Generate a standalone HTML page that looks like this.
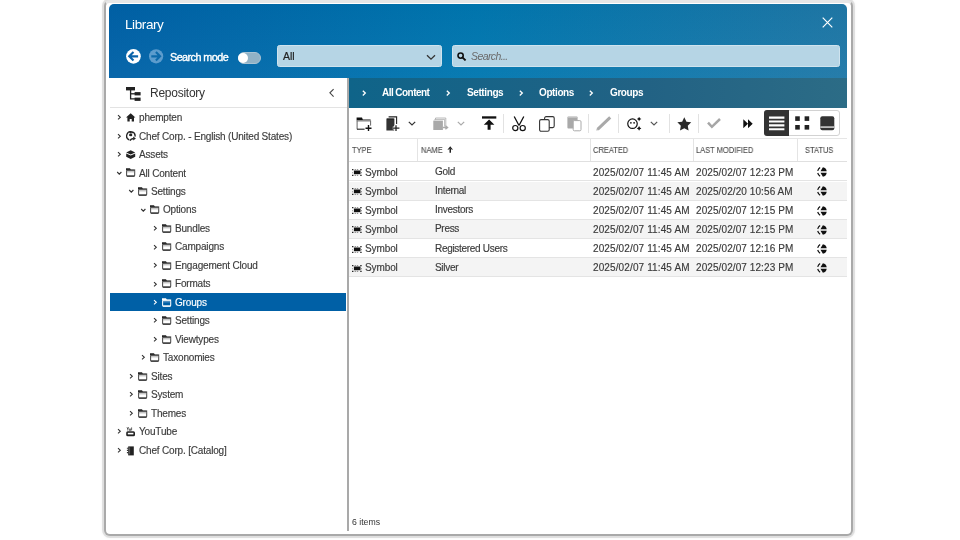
<!DOCTYPE html>
<html><head><meta charset="utf-8"><title>Library</title>
<style>
html,body{margin:0;padding:0;width:960px;height:540px;overflow:hidden;background:#fff;}
body{position:relative;font-family:"Liberation Sans", sans-serif;}
.t{position:absolute;white-space:nowrap;line-height:1;will-change:transform;}
.b{position:absolute;display:block;}
</style></head><body>
<div class="b" style="left:103.8px;top:-0.3px;width:749.4000000000001px;height:536.4px;border:2px solid #a9a9a9;border-top:3px solid #e6e6e6;border-radius:6px;box-sizing:border-box;box-shadow:0 0 0 2px rgba(0,0,0,0.09), 0 0 3px 2px rgba(0,0,0,0.05);background:#fff;"></div>
<div class="b" style="left:109px;top:4px;width:738px;height:74px;border-radius:5px 5px 0 0;background:linear-gradient(180deg,rgba(0,0,0,0.025),rgba(255,255,255,0.035)),linear-gradient(90deg,#0061a7 0%,#0077b0 50%,#1f78a7 100%);"></div>
<div class="t" style="left:124.50px;top:17.67px;font-size:13.5px;color:#fff;font-weight:normal;letter-spacing:-0.4px;font-style:normal;">Library</div>
<svg class="b" style="left:822px;top:16.6px" width="11" height="11" viewBox="0 0 11 11"><path d="M0.7 0.7L10.3 10.3M10.3 0.7L0.7 10.3" stroke="#fff" stroke-width="1.2"/></svg>
<svg class="b" style="left:125.8px;top:49px" width="15" height="15" viewBox="0 0 15 15"><circle cx="7.45" cy="7.35" r="7.35" fill="#fff"/><path d="M3 7.35H12.1M7.5 3.1L3.2 7.35L7.5 11.6" stroke="#0a64aa" stroke-width="2.1" fill="none"/></svg>
<svg class="b" style="left:148.6px;top:49px" width="15" height="15" viewBox="0 0 15 15"><circle cx="7.1" cy="7.35" r="7.1" fill="#5c9ccd"/><path d="M2.3 7.35H11.1M6.9 3.1L11.1 7.35L6.9 11.6" stroke="#0d6aab" stroke-width="2.1" fill="none"/></svg>
<div class="t" style="left:169.60px;top:52.06px;font-size:10.8px;color:#fff;font-weight:normal;letter-spacing:-0.55px;font-style:normal;-webkit-text-stroke:0.35px #fff;">Search mode</div>
<div class="b" style="left:237.5px;top:51.9px;width:23.5px;height:11.800000000000004px;background:#91b2c6;border:1px solid #a9c3d3;box-sizing:border-box;border-radius:6px;"></div>
<div class="b" style="left:237.6px;top:52.6px;width:10.400000000000006px;height:10.399999999999999px;background:#fff;border-radius:50%;"></div>
<div class="b" style="left:277px;top:45.3px;width:165px;height:22.0px;background:#b6d5e5;border:1px solid #cfe3ee;box-sizing:border-box;border-radius:2.5px;"></div>
<div class="t" style="left:282.70px;top:51.11px;font-size:10.5px;color:#222;font-weight:normal;letter-spacing:0px;font-style:normal;-webkit-text-stroke:0.2px #222;">All</div>
<svg class="b" style="left:426.1px;top:53.7px" width="10" height="7" viewBox="0 0 10 7"><path d="M1 1.2L5 5.2L9 1.2" stroke="#333" stroke-width="1.3" fill="none"/></svg>
<div class="b" style="left:452px;top:45.3px;width:388px;height:22.0px;background:#b6d5e5;border:1px solid #cfe3ee;box-sizing:border-box;border-radius:2.5px;"></div>
<svg class="b" style="left:457px;top:52px" width="10" height="9" viewBox="0 0 10 9"><circle cx="3.6" cy="3.6" r="2.6" stroke="#111" stroke-width="1.6" fill="none"/><path d="M5.4 5.4L8.6 8.4" stroke="#111" stroke-width="1.9"/></svg>
<div class="t" style="left:471.40px;top:51.01px;font-size:10.5px;color:#6a6a6a;font-weight:normal;letter-spacing:-0.6px;font-style:italic;">Search...</div>
<div class="b" style="left:109.5px;top:78px;width:237.5px;height:30.200000000000003px;background:#fff;border-bottom:1.2px solid #e3e3e3;box-sizing:border-box;"></div>
<svg class="b" style="left:126px;top:87px" width="15" height="15" viewBox="0 0 15 15"><rect x="0" y="0" width="9" height="3.4" fill="#222"/><path d="M4.6 3V11.8H9" stroke="#222" stroke-width="1.3" fill="none"/><path d="M4.6 6.8H9" stroke="#222" stroke-width="1.3"/><rect x="8.6" y="5.1" width="6" height="3.3" fill="#222"/><rect x="8.6" y="10.6" width="6" height="3.3" fill="#222"/></svg>
<div class="t" style="left:149.60px;top:86.54px;font-size:12px;color:#333;font-weight:normal;letter-spacing:-0.25px;font-style:normal;">Repository</div>
<svg class="b" style="left:328px;top:87px" width="7" height="11" viewBox="0 0 7 11"><path d="M5.6 2.1L1.9 5.8L5.6 9.6" stroke="#444" stroke-width="1.1" fill="none"/></svg>
<div class="b" style="left:347px;top:78px;width:1.6000000000000227px;height:453px;background:#a9a9a9;"></div>
<svg class="b" style="left:117.4px;top:114.1px" width="5" height="7" viewBox="0 0 5 7"><path d="M1 1.2L3.3 3.3L1 5.4" stroke="#333" stroke-width="1.1" fill="none"/></svg>
<svg class="b" style="left:126px;top:112.8px" width="10" height="10" viewBox="0 0 10 10"><path d="M4.7 0.3L9.4 4.6H8V8.6H5.7V6H3.7V8.6H1.4V4.6H0Z" fill="#222"/></svg>
<div class="t" style="left:138.80px;top:113.03px;font-size:10px;color:#3c3c3c;font-weight:normal;letter-spacing:-0.18px;font-style:normal;-webkit-text-stroke:0.15px #3c3c3c;">phempten</div>
<svg class="b" style="left:117.4px;top:132.59px" width="5" height="7" viewBox="0 0 5 7"><path d="M1 1.2L3.3 3.3L1 5.4" stroke="#333" stroke-width="1.1" fill="none"/></svg>
<svg class="b" style="left:126px;top:131.29000000000002px" width="10" height="10" viewBox="0 0 10 10"><path d="M3.2 8.8A4.2 4.2 0 1 1 9 5.6" stroke="#222" stroke-width="1.35" fill="none"/><path d="M3 3.6Q4.2 2.4 5.9 3Q6.8 4 5.9 5.1Q4.4 5.8 3 4.6Z" fill="#222"/><path d="M3.5 1.4Q5 2.4 7 1.5" stroke="#222" stroke-width="1.3" fill="none"/><path d="M3.9 9.6Q5 7.6 7.6 7.5" stroke="#222" stroke-width="1.4" fill="none"/><path d="M7.2 5.6L9.9 7.5L7.2 9.4Z" fill="#222"/></svg>
<div class="t" style="left:138.80px;top:131.53px;font-size:10px;color:#3c3c3c;font-weight:normal;letter-spacing:-0.18px;font-style:normal;-webkit-text-stroke:0.15px #3c3c3c;">Chef Corp. - English (United States)</div>
<svg class="b" style="left:117.4px;top:151.07999999999998px" width="5" height="7" viewBox="0 0 5 7"><path d="M1 1.2L3.3 3.3L1 5.4" stroke="#333" stroke-width="1.1" fill="none"/></svg>
<svg class="b" style="left:126px;top:149.78px" width="10" height="10" viewBox="0 0 10 10"><path d="M4.7 0.2L9.2 2.4L4.7 4.6L0.2 2.4Z" fill="#222"/><path d="M0.2 3.4L4.7 5.6L9.2 3.4V6.8L4.7 9L0.2 6.8Z" fill="#222"/></svg>
<div class="t" style="left:138.80px;top:150.01px;font-size:10px;color:#3c3c3c;font-weight:normal;letter-spacing:-0.18px;font-style:normal;-webkit-text-stroke:0.15px #3c3c3c;">Assets</div>
<svg class="b" style="left:116.4px;top:170.97px" width="7" height="5" viewBox="0 0 7 5"><path d="M1.2 1L3.3 3.2L5.4 1" stroke="#333" stroke-width="1.1" fill="none"/></svg>
<svg class="b" style="left:126px;top:168.27px" width="10" height="10" viewBox="0 0 10 10"><path d="M0 0.3H3.9L4.9 1.6H9.2V2.6H0Z" fill="#222"/><rect x="0.6" y="2.3" width="8.1" height="5.8" rx="0.8" stroke="#4a4a4a" stroke-width="1.05" fill="none"/><path d="M0.8 8.1H8.5" stroke="#2a2a2a" stroke-width="1"/><path d="M1 3.8H8.4" stroke="#999" stroke-width="0.8"/></svg>
<div class="t" style="left:138.80px;top:168.50px;font-size:10px;color:#3c3c3c;font-weight:normal;letter-spacing:-0.18px;font-style:normal;-webkit-text-stroke:0.15px #3c3c3c;">All Content</div>
<svg class="b" style="left:128.4px;top:189.46px" width="7" height="5" viewBox="0 0 7 5"><path d="M1.2 1L3.3 3.2L5.4 1" stroke="#333" stroke-width="1.1" fill="none"/></svg>
<svg class="b" style="left:138px;top:186.76000000000002px" width="10" height="10" viewBox="0 0 10 10"><path d="M0 0.3H3.9L4.9 1.6H9.2V2.6H0Z" fill="#222"/><rect x="0.6" y="2.3" width="8.1" height="5.8" rx="0.8" stroke="#4a4a4a" stroke-width="1.05" fill="none"/><path d="M0.8 8.1H8.5" stroke="#2a2a2a" stroke-width="1"/><path d="M1 3.8H8.4" stroke="#999" stroke-width="0.8"/></svg>
<div class="t" style="left:150.80px;top:187.00px;font-size:10px;color:#3c3c3c;font-weight:normal;letter-spacing:-0.18px;font-style:normal;-webkit-text-stroke:0.15px #3c3c3c;">Settings</div>
<svg class="b" style="left:140.4px;top:207.95px" width="7" height="5" viewBox="0 0 7 5"><path d="M1.2 1L3.3 3.2L5.4 1" stroke="#333" stroke-width="1.1" fill="none"/></svg>
<svg class="b" style="left:150px;top:205.25px" width="10" height="10" viewBox="0 0 10 10"><path d="M0 0.3H3.9L4.9 1.6H9.2V2.6H0Z" fill="#222"/><rect x="0.6" y="2.3" width="8.1" height="5.8" rx="0.8" stroke="#4a4a4a" stroke-width="1.05" fill="none"/><path d="M0.8 8.1H8.5" stroke="#2a2a2a" stroke-width="1"/><path d="M1 3.8H8.4" stroke="#999" stroke-width="0.8"/></svg>
<div class="t" style="left:162.80px;top:205.48px;font-size:10px;color:#3c3c3c;font-weight:normal;letter-spacing:-0.18px;font-style:normal;-webkit-text-stroke:0.15px #3c3c3c;">Options</div>
<svg class="b" style="left:153.4px;top:225.04px" width="5" height="7" viewBox="0 0 5 7"><path d="M1 1.2L3.3 3.3L1 5.4" stroke="#333" stroke-width="1.1" fill="none"/></svg>
<svg class="b" style="left:162px;top:223.74px" width="10" height="10" viewBox="0 0 10 10"><path d="M0 0.3H3.9L4.9 1.6H9.2V2.6H0Z" fill="#222"/><rect x="0.6" y="2.3" width="8.1" height="5.8" rx="0.8" stroke="#4a4a4a" stroke-width="1.05" fill="none"/><path d="M0.8 8.1H8.5" stroke="#2a2a2a" stroke-width="1"/><path d="M1 3.8H8.4" stroke="#999" stroke-width="0.8"/></svg>
<div class="t" style="left:174.80px;top:223.97px;font-size:10px;color:#3c3c3c;font-weight:normal;letter-spacing:-0.18px;font-style:normal;-webkit-text-stroke:0.15px #3c3c3c;">Bundles</div>
<svg class="b" style="left:153.4px;top:243.52999999999997px" width="5" height="7" viewBox="0 0 5 7"><path d="M1 1.2L3.3 3.3L1 5.4" stroke="#333" stroke-width="1.1" fill="none"/></svg>
<svg class="b" style="left:162px;top:242.23px" width="10" height="10" viewBox="0 0 10 10"><path d="M0 0.3H3.9L4.9 1.6H9.2V2.6H0Z" fill="#222"/><rect x="0.6" y="2.3" width="8.1" height="5.8" rx="0.8" stroke="#4a4a4a" stroke-width="1.05" fill="none"/><path d="M0.8 8.1H8.5" stroke="#2a2a2a" stroke-width="1"/><path d="M1 3.8H8.4" stroke="#999" stroke-width="0.8"/></svg>
<div class="t" style="left:174.80px;top:242.46px;font-size:10px;color:#3c3c3c;font-weight:normal;letter-spacing:-0.18px;font-style:normal;-webkit-text-stroke:0.15px #3c3c3c;">Campaigns</div>
<svg class="b" style="left:153.4px;top:262.02px" width="5" height="7" viewBox="0 0 5 7"><path d="M1 1.2L3.3 3.3L1 5.4" stroke="#333" stroke-width="1.1" fill="none"/></svg>
<svg class="b" style="left:162px;top:260.71999999999997px" width="10" height="10" viewBox="0 0 10 10"><path d="M0 0.3H3.9L4.9 1.6H9.2V2.6H0Z" fill="#222"/><rect x="0.6" y="2.3" width="8.1" height="5.8" rx="0.8" stroke="#4a4a4a" stroke-width="1.05" fill="none"/><path d="M0.8 8.1H8.5" stroke="#2a2a2a" stroke-width="1"/><path d="M1 3.8H8.4" stroke="#999" stroke-width="0.8"/></svg>
<div class="t" style="left:174.80px;top:260.95px;font-size:10px;color:#3c3c3c;font-weight:normal;letter-spacing:-0.18px;font-style:normal;-webkit-text-stroke:0.15px #3c3c3c;">Engagement Cloud</div>
<svg class="b" style="left:153.4px;top:280.51px" width="5" height="7" viewBox="0 0 5 7"><path d="M1 1.2L3.3 3.3L1 5.4" stroke="#333" stroke-width="1.1" fill="none"/></svg>
<svg class="b" style="left:162px;top:279.21px" width="10" height="10" viewBox="0 0 10 10"><path d="M0 0.3H3.9L4.9 1.6H9.2V2.6H0Z" fill="#222"/><rect x="0.6" y="2.3" width="8.1" height="5.8" rx="0.8" stroke="#4a4a4a" stroke-width="1.05" fill="none"/><path d="M0.8 8.1H8.5" stroke="#2a2a2a" stroke-width="1"/><path d="M1 3.8H8.4" stroke="#999" stroke-width="0.8"/></svg>
<div class="t" style="left:174.80px;top:279.44px;font-size:10px;color:#3c3c3c;font-weight:normal;letter-spacing:-0.18px;font-style:normal;-webkit-text-stroke:0.15px #3c3c3c;">Formats</div>
<div class="b" style="left:109.5px;top:293px;width:236.0px;height:18.19999999999999px;background:#0060a6;"></div>
<svg class="b" style="left:153.4px;top:299.0px" width="5" height="7" viewBox="0 0 5 7"><path d="M1 1.2L3.3 3.3L1 5.4" stroke="#fff" stroke-width="1.1" fill="none"/></svg>
<svg class="b" style="left:162px;top:297.7px" width="10" height="10" viewBox="0 0 10 10"><path d="M0 0.3H3.9L4.9 1.6H9.2V2.6H0Z" fill="#fff"/><rect x="0.6" y="2.3" width="8.1" height="5.8" rx="0.8" stroke="#fff" stroke-width="1.05" fill="none"/><path d="M0.8 8.1H8.5" stroke="#fff" stroke-width="1"/><path d="M1 3.8H8.4" stroke="#8fb8da" stroke-width="0.8"/></svg>
<div class="t" style="left:174.80px;top:297.94px;font-size:10px;color:#fff;font-weight:normal;letter-spacing:-0.18px;font-style:normal;-webkit-text-stroke:0.15px #fff;">Groups</div>
<svg class="b" style="left:153.4px;top:317.49px" width="5" height="7" viewBox="0 0 5 7"><path d="M1 1.2L3.3 3.3L1 5.4" stroke="#333" stroke-width="1.1" fill="none"/></svg>
<svg class="b" style="left:162px;top:316.19px" width="10" height="10" viewBox="0 0 10 10"><path d="M0 0.3H3.9L4.9 1.6H9.2V2.6H0Z" fill="#222"/><rect x="0.6" y="2.3" width="8.1" height="5.8" rx="0.8" stroke="#4a4a4a" stroke-width="1.05" fill="none"/><path d="M0.8 8.1H8.5" stroke="#2a2a2a" stroke-width="1"/><path d="M1 3.8H8.4" stroke="#999" stroke-width="0.8"/></svg>
<div class="t" style="left:174.80px;top:316.43px;font-size:10px;color:#3c3c3c;font-weight:normal;letter-spacing:-0.18px;font-style:normal;-webkit-text-stroke:0.15px #3c3c3c;">Settings</div>
<svg class="b" style="left:153.4px;top:335.98px" width="5" height="7" viewBox="0 0 5 7"><path d="M1 1.2L3.3 3.3L1 5.4" stroke="#333" stroke-width="1.1" fill="none"/></svg>
<svg class="b" style="left:162px;top:334.68px" width="10" height="10" viewBox="0 0 10 10"><path d="M0 0.3H3.9L4.9 1.6H9.2V2.6H0Z" fill="#222"/><rect x="0.6" y="2.3" width="8.1" height="5.8" rx="0.8" stroke="#4a4a4a" stroke-width="1.05" fill="none"/><path d="M0.8 8.1H8.5" stroke="#2a2a2a" stroke-width="1"/><path d="M1 3.8H8.4" stroke="#999" stroke-width="0.8"/></svg>
<div class="t" style="left:174.80px;top:334.92px;font-size:10px;color:#3c3c3c;font-weight:normal;letter-spacing:-0.18px;font-style:normal;-webkit-text-stroke:0.15px #3c3c3c;">Viewtypes</div>
<svg class="b" style="left:141.4px;top:354.46999999999997px" width="5" height="7" viewBox="0 0 5 7"><path d="M1 1.2L3.3 3.3L1 5.4" stroke="#333" stroke-width="1.1" fill="none"/></svg>
<svg class="b" style="left:150px;top:353.16999999999996px" width="10" height="10" viewBox="0 0 10 10"><path d="M0 0.3H3.9L4.9 1.6H9.2V2.6H0Z" fill="#222"/><rect x="0.6" y="2.3" width="8.1" height="5.8" rx="0.8" stroke="#4a4a4a" stroke-width="1.05" fill="none"/><path d="M0.8 8.1H8.5" stroke="#2a2a2a" stroke-width="1"/><path d="M1 3.8H8.4" stroke="#999" stroke-width="0.8"/></svg>
<div class="t" style="left:162.80px;top:353.40px;font-size:10px;color:#3c3c3c;font-weight:normal;letter-spacing:-0.18px;font-style:normal;-webkit-text-stroke:0.15px #3c3c3c;">Taxonomies</div>
<svg class="b" style="left:129.4px;top:372.9599999999999px" width="5" height="7" viewBox="0 0 5 7"><path d="M1 1.2L3.3 3.3L1 5.4" stroke="#333" stroke-width="1.1" fill="none"/></svg>
<svg class="b" style="left:138px;top:371.6599999999999px" width="10" height="10" viewBox="0 0 10 10"><path d="M0 0.3H3.9L4.9 1.6H9.2V2.6H0Z" fill="#222"/><rect x="0.6" y="2.3" width="8.1" height="5.8" rx="0.8" stroke="#4a4a4a" stroke-width="1.05" fill="none"/><path d="M0.8 8.1H8.5" stroke="#2a2a2a" stroke-width="1"/><path d="M1 3.8H8.4" stroke="#999" stroke-width="0.8"/></svg>
<div class="t" style="left:150.80px;top:371.89px;font-size:10px;color:#3c3c3c;font-weight:normal;letter-spacing:-0.18px;font-style:normal;-webkit-text-stroke:0.15px #3c3c3c;">Sites</div>
<svg class="b" style="left:129.4px;top:391.44999999999993px" width="5" height="7" viewBox="0 0 5 7"><path d="M1 1.2L3.3 3.3L1 5.4" stroke="#333" stroke-width="1.1" fill="none"/></svg>
<svg class="b" style="left:138px;top:390.1499999999999px" width="10" height="10" viewBox="0 0 10 10"><path d="M0 0.3H3.9L4.9 1.6H9.2V2.6H0Z" fill="#222"/><rect x="0.6" y="2.3" width="8.1" height="5.8" rx="0.8" stroke="#4a4a4a" stroke-width="1.05" fill="none"/><path d="M0.8 8.1H8.5" stroke="#2a2a2a" stroke-width="1"/><path d="M1 3.8H8.4" stroke="#999" stroke-width="0.8"/></svg>
<div class="t" style="left:150.80px;top:390.38px;font-size:10px;color:#3c3c3c;font-weight:normal;letter-spacing:-0.18px;font-style:normal;-webkit-text-stroke:0.15px #3c3c3c;">System</div>
<svg class="b" style="left:129.4px;top:409.93999999999994px" width="5" height="7" viewBox="0 0 5 7"><path d="M1 1.2L3.3 3.3L1 5.4" stroke="#333" stroke-width="1.1" fill="none"/></svg>
<svg class="b" style="left:138px;top:408.63999999999993px" width="10" height="10" viewBox="0 0 10 10"><path d="M0 0.3H3.9L4.9 1.6H9.2V2.6H0Z" fill="#222"/><rect x="0.6" y="2.3" width="8.1" height="5.8" rx="0.8" stroke="#4a4a4a" stroke-width="1.05" fill="none"/><path d="M0.8 8.1H8.5" stroke="#2a2a2a" stroke-width="1"/><path d="M1 3.8H8.4" stroke="#999" stroke-width="0.8"/></svg>
<div class="t" style="left:150.80px;top:408.87px;font-size:10px;color:#3c3c3c;font-weight:normal;letter-spacing:-0.18px;font-style:normal;-webkit-text-stroke:0.15px #3c3c3c;">Themes</div>
<svg class="b" style="left:117.4px;top:428.42999999999995px" width="5" height="7" viewBox="0 0 5 7"><path d="M1 1.2L3.3 3.3L1 5.4" stroke="#333" stroke-width="1.1" fill="none"/></svg>
<svg class="b" style="left:126px;top:427.12999999999994px" width="10" height="10" viewBox="0 0 10 10"><path d="M1 0.2L1.8 2.2L2.6 0.2M1.8 2.2V3.6M3.4 1.6V3.4H4.6V1.6M5.6 0.4V3.4" stroke="#222" stroke-width="0.7" fill="none"/><rect x="0.2" y="4.2" width="8.8" height="5" rx="1.5" fill="#222"/><rect x="1.8" y="5.8" width="5.6" height="1.6" fill="#fff"/></svg>
<div class="t" style="left:138.80px;top:427.36px;font-size:10px;color:#3c3c3c;font-weight:normal;letter-spacing:-0.18px;font-style:normal;-webkit-text-stroke:0.15px #3c3c3c;">YouTube</div>
<svg class="b" style="left:117.4px;top:446.91999999999996px" width="5" height="7" viewBox="0 0 5 7"><path d="M1 1.2L3.3 3.3L1 5.4" stroke="#333" stroke-width="1.1" fill="none"/></svg>
<svg class="b" style="left:126px;top:445.61999999999995px" width="10" height="10" viewBox="0 0 10 10"><rect x="2.2" y="0.4" width="5.6" height="9" fill="#222"/><path d="M0.9 2.2H2.4M0.9 4.4H2.4M0.9 6.6H2.4" stroke="#333" stroke-width="1.1"/><path d="M3.6 1.4V8.4" stroke="#777" stroke-width="0.7"/></svg>
<div class="t" style="left:138.80px;top:445.85px;font-size:10px;color:#3c3c3c;font-weight:normal;letter-spacing:-0.18px;font-style:normal;-webkit-text-stroke:0.15px #3c3c3c;">Chef Corp. [Catalog]</div>
<div class="b" style="left:348.6px;top:77.5px;width:498.4px;height:30.0px;background:linear-gradient(90deg,#0f6489 0%,#226284 60%,#2c6c86 100%);"></div>
<svg class="b" style="left:361.9px;top:89.6px" width="5" height="6.5" viewBox="0 0 5 6.5"><path d="M0.8 0.8L3.3 3.1L0.8 5.4" stroke="#fff" stroke-width="1.3" fill="none"/></svg>
<svg class="b" style="left:445.6px;top:89.6px" width="5" height="6.5" viewBox="0 0 5 6.5"><path d="M0.8 0.8L3.3 3.1L0.8 5.4" stroke="#fff" stroke-width="1.3" fill="none"/></svg>
<svg class="b" style="left:518.5px;top:89.6px" width="5" height="6.5" viewBox="0 0 5 6.5"><path d="M0.8 0.8L3.3 3.1L0.8 5.4" stroke="#fff" stroke-width="1.3" fill="none"/></svg>
<svg class="b" style="left:589.2px;top:89.6px" width="5" height="6.5" viewBox="0 0 5 6.5"><path d="M0.8 0.8L3.3 3.1L0.8 5.4" stroke="#fff" stroke-width="1.3" fill="none"/></svg>
<div class="t" style="left:381.70px;top:87.53px;font-size:10px;color:#fff;font-weight:bold;letter-spacing:-0.55px;font-style:normal;">All Content</div>
<div class="t" style="left:466.90px;top:87.53px;font-size:10px;color:#fff;font-weight:bold;letter-spacing:-0.4px;font-style:normal;">Settings</div>
<div class="t" style="left:539.20px;top:87.53px;font-size:10px;color:#fff;font-weight:bold;letter-spacing:-0.4px;font-style:normal;">Options</div>
<div class="t" style="left:609.90px;top:87.53px;font-size:10px;color:#fff;font-weight:bold;letter-spacing:-0.4px;font-style:normal;">Groups</div>
<div class="b" style="left:348.6px;top:107.5px;width:498.4px;height:31.0px;background:#fff;border-bottom:1px solid #e6e6e6;box-sizing:border-box;"></div>
<div class="b" style="left:502.9px;top:113.5px;width:1.0px;height:19.30000000000001px;background:#e2e2e2;"></div>
<div class="b" style="left:588.2px;top:113.5px;width:1.0px;height:19.30000000000001px;background:#e2e2e2;"></div>
<div class="b" style="left:617.8px;top:113.5px;width:1.0px;height:19.30000000000001px;background:#e2e2e2;"></div>
<div class="b" style="left:669.1px;top:113.5px;width:1.0px;height:19.30000000000001px;background:#e2e2e2;"></div>
<div class="b" style="left:698.4px;top:113.5px;width:1.0px;height:19.30000000000001px;background:#e2e2e2;"></div>
<svg class="b" style="left:355.5px;top:116.5px" width="17" height="15" viewBox="0 0 17 15"><path d="M0.6 0.6H6L6.8 2.6H14.6V3.6H0.6Z" fill="#111"/><path d="M0.8 4.1H14.3" stroke="#999" stroke-width="1"/><path d="M1.1 3.5V12.3M14.6 3.5V8.6" stroke="#666" stroke-width="1" fill="none"/><path d="M1 12.2H8.6" stroke="#222" stroke-width="1.1"/><path d="M12.5 8.1V14M9.5 11.2H15.5" stroke="#111" stroke-width="1.4"/></svg>
<svg class="b" style="left:385.5px;top:115.5px" width="14" height="16" viewBox="0 0 14 16"><path d="M2.6 0.9H10.6V8" stroke="#222" stroke-width="1.1" fill="none"/><rect x="0.4" y="2.5" width="8" height="12" fill="#333"/><path d="M1 3H7.8" stroke="#111" stroke-width="0.8"/><path d="M10 9V15.2M6.8 12.1H13.6" stroke="#fff" stroke-width="3"/><path d="M10 9.2V15M7 12.1H13.4" stroke="#222" stroke-width="1.3"/></svg>
<svg class="b" style="left:408.2px;top:121.2px" width="8" height="5" viewBox="0 0 8 5"><path d="M0.8 0.8L4 4L7.2 0.8" stroke="#333" stroke-width="1.2" fill="none"/></svg>
<svg class="b" style="left:432.5px;top:116.5px" width="16" height="14" viewBox="0 0 16 14"><path d="M2.5 2.3V1H12.8V9.2M1.8 3.2V2.4H11.6V9.6" stroke="#aaa" stroke-width="0.8" fill="none"/><rect x="0.3" y="3.6" width="9.6" height="9.4" fill="#a9a9a9"/><path d="M10 10.5H14M12.4 8.8L14.6 10.5L12.4 12.2" stroke="#aaa" stroke-width="1.3" fill="none"/></svg>
<svg class="b" style="left:456.7px;top:121.2px" width="8" height="5" viewBox="0 0 8 5"><path d="M0.8 0.8L4 4L7.2 0.8" stroke="#aaa" stroke-width="1.2" fill="none"/></svg>
<svg class="b" style="left:481.5px;top:116px" width="15" height="14" viewBox="0 0 15 14"><rect x="0" y="0.3" width="14.3" height="2.3" fill="#111"/><path d="M5.6 13.8V8.8H1.8L7.1 3.6L12.4 8.8H8.6V13.8Z" fill="#111"/></svg>
<svg class="b" style="left:511.5px;top:115.5px" width="14" height="16" viewBox="0 0 14 16"><path d="M2.2 0.5L7 9.5M11.8 0.5L7 9.5" stroke="#111" stroke-width="1.3"/><circle cx="3.3" cy="12.1" r="2.6" stroke="#111" stroke-width="1.2" fill="none"/><circle cx="10.7" cy="12.1" r="2.6" stroke="#111" stroke-width="1.2" fill="none"/></svg>
<svg class="b" style="left:538.5px;top:115.5px" width="16" height="16" viewBox="0 0 16 16"><rect x="5.6" y="0.6" width="9.6" height="11" rx="1.5" stroke="#333" stroke-width="1.1" fill="#fff"/><rect x="0.6" y="3.6" width="9.6" height="11.6" rx="1.5" stroke="#333" stroke-width="1.1" fill="#fff"/></svg>
<svg class="b" style="left:566.5px;top:115.5px" width="15" height="16" viewBox="0 0 15 16"><rect x="0.4" y="0.4" width="10.2" height="12" rx="1" fill="#a9a9a9"/><path d="M1 1.5H10" stroke="#ccc" stroke-width="0.7"/><rect x="6.2" y="4.6" width="7.8" height="10.2" rx="1.2" stroke="#aaa" stroke-width="1" fill="#fff"/></svg>
<svg class="b" style="left:595.5px;top:116px" width="16" height="15" viewBox="0 0 16 15"><path d="M1.6 13.3L14.2 1.3" stroke="#a9a9a9" stroke-width="3"/><path d="M0.6 14.4L1.6 13.2" stroke="#aaa" stroke-width="1.2"/></svg>
<svg class="b" style="left:626.5px;top:116.5px" width="15" height="14" viewBox="0 0 15 14"><circle cx="5.5" cy="6.7" r="4.75" stroke="#111" stroke-width="1.2" fill="none"/><circle cx="3.9" cy="5.8" r="0.85" fill="#111"/><circle cx="7.1" cy="5.8" r="0.85" fill="#111"/><path d="M12.1 -0.2999999999999998Q12.549999999999999 1.55 14.399999999999999 2.0Q12.549999999999999 2.45 12.1 4.3Q11.65 2.45 9.8 2.0Q11.65 1.55 12.1 -0.2999999999999998Z M12.1 9.100000000000001Q12.549999999999999 10.950000000000001 14.399999999999999 11.4Q12.549999999999999 11.85 12.1 13.7Q11.65 11.85 9.8 11.4Q11.65 10.950000000000001 12.1 9.100000000000001Z" fill="#111"/></svg>
<svg class="b" style="left:650px;top:121.2px" width="8" height="5" viewBox="0 0 8 5"><path d="M0.8 0.8L4 4L7.2 0.8" stroke="#555" stroke-width="1.2" fill="none"/></svg>
<svg class="b" style="left:676.5px;top:116.5px" width="15" height="14" viewBox="0 0 15 14"><path d="M7.3 0.3L9.45 4.65L14.24 5.34L10.77 8.73L11.59 13.51L7.3 11.25L3.01 13.51L3.83 8.73L0.36 5.34L5.15 4.65Z" fill="#2a2a2a"/></svg>
<svg class="b" style="left:707px;top:118px" width="14" height="11" viewBox="0 0 14 11"><path d="M1 4.6L4.9 8.8L13 1" stroke="#a6a6a6" stroke-width="2.5" fill="none"/></svg>
<svg class="b" style="left:743px;top:118.5px" width="10" height="9.5" viewBox="0 0 10 9.5"><path d="M0.3 0.3L5 4.7L0.3 9.2Z M5 0.3L9.7 4.7L5 9.2Z" fill="#111"/></svg>
<div class="b" style="left:764px;top:110px;width:75.79999999999995px;height:26.30000000000001px;border:1px solid #d2d2d2;border-radius:3px;box-sizing:border-box;background:#fff;"></div>
<div class="b" style="left:764px;top:110px;width:25px;height:26.30000000000001px;background:#333;border-radius:3px 0 0 3px;"></div>
<svg class="b" style="left:768.8px;top:115.8px" width="16" height="15" viewBox="0 0 16 15"><path d="M0 1.6H15.4M0 5.5H15.4M0 9.4H15.4M0 13.3H15.4" stroke="#fff" stroke-width="2.1"/></svg>
<svg class="b" style="left:794.5px;top:116px" width="15" height="14" viewBox="0 0 15 14"><rect x="0.2" y="0.3" width="4.6" height="4.6" fill="#222"/><rect x="9.6" y="0.3" width="4.6" height="4.6" fill="#222"/><rect x="0.2" y="9" width="4.6" height="4.6" fill="#222"/><rect x="9.6" y="9" width="4.6" height="4.6" fill="#222"/></svg>
<svg class="b" style="left:819.8px;top:115.6px" width="15" height="15" viewBox="0 0 15 15"><rect x="0.3" y="0.2" width="14" height="14" rx="2" fill="#333"/><rect x="0.3" y="10.2" width="14" height="1.8" fill="#bbb"/></svg>
<div class="b" style="left:348.6px;top:138.5px;width:498.4px;height:23.900000000000006px;background:#fff;border-bottom:1.5px solid #e0e0e0;box-sizing:border-box;"></div>
<div class="b" style="left:417.3px;top:139px;width:1.0px;height:22px;background:#e4e4e4;"></div>
<div class="b" style="left:590.3px;top:139px;width:1.0px;height:22px;background:#e4e4e4;"></div>
<div class="b" style="left:693.3px;top:139px;width:1.0px;height:22px;background:#e4e4e4;"></div>
<div class="b" style="left:796.5px;top:139px;width:1.0px;height:22px;background:#e4e4e4;"></div>
<div class="t" style="left:351.60px;top:146.00px;font-size:8.5px;color:#4a4a4a;font-weight:normal;letter-spacing:0px;font-style:normal;transform:scaleX(0.88);transform-origin:0 0;-webkit-text-stroke:0.1px #4a4a4a;">TYPE</div>
<div class="t" style="left:420.60px;top:146.00px;font-size:8.5px;color:#4a4a4a;font-weight:normal;letter-spacing:0px;font-style:normal;transform:scaleX(0.88);transform-origin:0 0;-webkit-text-stroke:0.1px #4a4a4a;">NAME</div>
<div class="t" style="left:593.40px;top:146.00px;font-size:8.5px;color:#4a4a4a;font-weight:normal;letter-spacing:0px;font-style:normal;transform:scaleX(0.88);transform-origin:0 0;-webkit-text-stroke:0.1px #4a4a4a;">CREATED</div>
<div class="t" style="left:696.10px;top:146.00px;font-size:8.5px;color:#4a4a4a;font-weight:normal;letter-spacing:0px;font-style:normal;transform:scaleX(0.88);transform-origin:0 0;-webkit-text-stroke:0.1px #4a4a4a;">LAST MODIFIED</div>
<div class="t" style="left:805.40px;top:146.00px;font-size:8.5px;color:#4a4a4a;font-weight:normal;letter-spacing:0px;font-style:normal;transform:scaleX(0.88);transform-origin:0 0;-webkit-text-stroke:0.1px #4a4a4a;">STATUS</div>
<svg class="b" style="left:446.6px;top:146.4px" width="6.5" height="7" viewBox="0 0 6.5 7"><path d="M3.25 6.8V2.6" stroke="#222" stroke-width="1.5"/><path d="M0.4 3.8L3.25 0.2L6.1 3.8L4.6 3.6L3.25 2.4L1.9 3.6Z" fill="#222"/></svg>
<div class="b" style="left:348.6px;top:162.4px;width:498.4px;height:19.099999999999994px;background:#fff;border-bottom:1px solid #e4e4e4;box-sizing:border-box;"></div>
<svg class="b" style="left:351.7px;top:169.1px" width="10" height="7.5" viewBox="0 0 10 7.5"><rect x="1.9" y="1.5" width="6.6" height="3.7" fill="#111"/><path d="M0.1 0.7H1.4M8.3 0.7H9.6M0.1 6.3H1.4M8.3 6.3H9.6" stroke="#111" stroke-width="1.3"/><path d="M2.6 0.7H4M4.8 0.7H6.2M2.6 6.3H4M4.8 6.3H6.2M0.2 3.3V4.2M9.6 3.3V4.2" stroke="#777" stroke-width="1.1"/></svg>
<div class="t" style="left:365.20px;top:167.73px;font-size:10px;color:#3a3a3a;font-weight:normal;letter-spacing:-0.1px;font-style:normal;-webkit-text-stroke:0.15px #3a3a3a;">Symbol</div>
<div class="t" style="left:434.60px;top:167.03px;font-size:10px;color:#3a3a3a;font-weight:normal;letter-spacing:-0.3px;font-style:normal;-webkit-text-stroke:0.15px #3a3a3a;">Gold</div>
<div class="t" style="left:593.20px;top:167.73px;font-size:10px;color:#3a3a3a;font-weight:normal;letter-spacing:0.12px;font-style:normal;-webkit-text-stroke:0.15px #3a3a3a;">2025/02/07 11:45 AM</div>
<div class="t" style="left:695.60px;top:167.73px;font-size:10px;color:#3a3a3a;font-weight:normal;letter-spacing:0.09px;font-style:normal;-webkit-text-stroke:0.15px #3a3a3a;">2025/02/07 12:23 PM</div>
<svg class="b" style="left:817.4px;top:167.29999999999998px" width="10" height="10" viewBox="0 0 10 10"><path d="M0.7 3.9Q1.4 1.8 3.1 0.6M0.7 6Q1.4 8.1 3.1 9.3" stroke="#111" stroke-width="1.2" fill="none"/><path d="M3.5 4.25L5.9 0.2A4.7 4.7 0 0 1 9.7 4.25Z M3.5 5.65L5.9 9.7A4.7 4.7 0 0 0 9.7 5.65Z" fill="#111"/></svg>
<div class="b" style="left:348.6px;top:181.5px;width:498.4px;height:19.099999999999994px;background:#f4f4f4;border-bottom:1px solid #e4e4e4;box-sizing:border-box;"></div>
<svg class="b" style="left:351.7px;top:188.22px" width="10" height="7.5" viewBox="0 0 10 7.5"><rect x="1.9" y="1.5" width="6.6" height="3.7" fill="#111"/><path d="M0.1 0.7H1.4M8.3 0.7H9.6M0.1 6.3H1.4M8.3 6.3H9.6" stroke="#111" stroke-width="1.3"/><path d="M2.6 0.7H4M4.8 0.7H6.2M2.6 6.3H4M4.8 6.3H6.2M0.2 3.3V4.2M9.6 3.3V4.2" stroke="#777" stroke-width="1.1"/></svg>
<div class="t" style="left:365.20px;top:186.85px;font-size:10px;color:#3a3a3a;font-weight:normal;letter-spacing:-0.1px;font-style:normal;-webkit-text-stroke:0.15px #3a3a3a;">Symbol</div>
<div class="t" style="left:434.60px;top:186.16px;font-size:10px;color:#3a3a3a;font-weight:normal;letter-spacing:-0.3px;font-style:normal;-webkit-text-stroke:0.15px #3a3a3a;">Internal</div>
<div class="t" style="left:593.20px;top:186.85px;font-size:10px;color:#3a3a3a;font-weight:normal;letter-spacing:0.12px;font-style:normal;-webkit-text-stroke:0.15px #3a3a3a;">2025/02/07 11:45 AM</div>
<div class="t" style="left:695.60px;top:186.85px;font-size:10px;color:#3a3a3a;font-weight:normal;letter-spacing:0.09px;font-style:normal;-webkit-text-stroke:0.15px #3a3a3a;">2025/02/20 10:56 AM</div>
<svg class="b" style="left:817.4px;top:186.42px" width="10" height="10" viewBox="0 0 10 10"><path d="M0.7 3.9Q1.4 1.8 3.1 0.6M0.7 6Q1.4 8.1 3.1 9.3" stroke="#111" stroke-width="1.2" fill="none"/><path d="M3.5 4.25L5.9 0.2A4.7 4.7 0 0 1 9.7 4.25Z M3.5 5.65L5.9 9.7A4.7 4.7 0 0 0 9.7 5.65Z" fill="#111"/></svg>
<div class="b" style="left:348.6px;top:200.6px;width:498.4px;height:19.099999999999994px;background:#fff;border-bottom:1px solid #e4e4e4;box-sizing:border-box;"></div>
<svg class="b" style="left:351.7px;top:207.34px" width="10" height="7.5" viewBox="0 0 10 7.5"><rect x="1.9" y="1.5" width="6.6" height="3.7" fill="#111"/><path d="M0.1 0.7H1.4M8.3 0.7H9.6M0.1 6.3H1.4M8.3 6.3H9.6" stroke="#111" stroke-width="1.3"/><path d="M2.6 0.7H4M4.8 0.7H6.2M2.6 6.3H4M4.8 6.3H6.2M0.2 3.3V4.2M9.6 3.3V4.2" stroke="#777" stroke-width="1.1"/></svg>
<div class="t" style="left:365.20px;top:205.97px;font-size:10px;color:#3a3a3a;font-weight:normal;letter-spacing:-0.1px;font-style:normal;-webkit-text-stroke:0.15px #3a3a3a;">Symbol</div>
<div class="t" style="left:434.60px;top:205.28px;font-size:10px;color:#3a3a3a;font-weight:normal;letter-spacing:-0.3px;font-style:normal;-webkit-text-stroke:0.15px #3a3a3a;">Investors</div>
<div class="t" style="left:593.20px;top:205.97px;font-size:10px;color:#3a3a3a;font-weight:normal;letter-spacing:0.12px;font-style:normal;-webkit-text-stroke:0.15px #3a3a3a;">2025/02/07 11:45 AM</div>
<div class="t" style="left:695.60px;top:205.97px;font-size:10px;color:#3a3a3a;font-weight:normal;letter-spacing:0.09px;font-style:normal;-webkit-text-stroke:0.15px #3a3a3a;">2025/02/07 12:15 PM</div>
<svg class="b" style="left:817.4px;top:205.54px" width="10" height="10" viewBox="0 0 10 10"><path d="M0.7 3.9Q1.4 1.8 3.1 0.6M0.7 6Q1.4 8.1 3.1 9.3" stroke="#111" stroke-width="1.2" fill="none"/><path d="M3.5 4.25L5.9 0.2A4.7 4.7 0 0 1 9.7 4.25Z M3.5 5.65L5.9 9.7A4.7 4.7 0 0 0 9.7 5.65Z" fill="#111"/></svg>
<div class="b" style="left:348.6px;top:219.7px;width:498.4px;height:19.100000000000023px;background:#f4f4f4;border-bottom:1px solid #e4e4e4;box-sizing:border-box;"></div>
<svg class="b" style="left:351.7px;top:226.46px" width="10" height="7.5" viewBox="0 0 10 7.5"><rect x="1.9" y="1.5" width="6.6" height="3.7" fill="#111"/><path d="M0.1 0.7H1.4M8.3 0.7H9.6M0.1 6.3H1.4M8.3 6.3H9.6" stroke="#111" stroke-width="1.3"/><path d="M2.6 0.7H4M4.8 0.7H6.2M2.6 6.3H4M4.8 6.3H6.2M0.2 3.3V4.2M9.6 3.3V4.2" stroke="#777" stroke-width="1.1"/></svg>
<div class="t" style="left:365.20px;top:225.09px;font-size:10px;color:#3a3a3a;font-weight:normal;letter-spacing:-0.1px;font-style:normal;-webkit-text-stroke:0.15px #3a3a3a;">Symbol</div>
<div class="t" style="left:434.60px;top:224.40px;font-size:10px;color:#3a3a3a;font-weight:normal;letter-spacing:-0.3px;font-style:normal;-webkit-text-stroke:0.15px #3a3a3a;">Press</div>
<div class="t" style="left:593.20px;top:225.09px;font-size:10px;color:#3a3a3a;font-weight:normal;letter-spacing:0.12px;font-style:normal;-webkit-text-stroke:0.15px #3a3a3a;">2025/02/07 11:45 AM</div>
<div class="t" style="left:695.60px;top:225.09px;font-size:10px;color:#3a3a3a;font-weight:normal;letter-spacing:0.09px;font-style:normal;-webkit-text-stroke:0.15px #3a3a3a;">2025/02/07 12:15 PM</div>
<svg class="b" style="left:817.4px;top:224.66px" width="10" height="10" viewBox="0 0 10 10"><path d="M0.7 3.9Q1.4 1.8 3.1 0.6M0.7 6Q1.4 8.1 3.1 9.3" stroke="#111" stroke-width="1.2" fill="none"/><path d="M3.5 4.25L5.9 0.2A4.7 4.7 0 0 1 9.7 4.25Z M3.5 5.65L5.9 9.7A4.7 4.7 0 0 0 9.7 5.65Z" fill="#111"/></svg>
<div class="b" style="left:348.6px;top:238.8px;width:498.4px;height:19.099999999999966px;background:#fff;border-bottom:1px solid #e4e4e4;box-sizing:border-box;"></div>
<svg class="b" style="left:351.7px;top:245.58px" width="10" height="7.5" viewBox="0 0 10 7.5"><rect x="1.9" y="1.5" width="6.6" height="3.7" fill="#111"/><path d="M0.1 0.7H1.4M8.3 0.7H9.6M0.1 6.3H1.4M8.3 6.3H9.6" stroke="#111" stroke-width="1.3"/><path d="M2.6 0.7H4M4.8 0.7H6.2M2.6 6.3H4M4.8 6.3H6.2M0.2 3.3V4.2M9.6 3.3V4.2" stroke="#777" stroke-width="1.1"/></svg>
<div class="t" style="left:365.20px;top:244.22px;font-size:10px;color:#3a3a3a;font-weight:normal;letter-spacing:-0.1px;font-style:normal;-webkit-text-stroke:0.15px #3a3a3a;">Symbol</div>
<div class="t" style="left:434.60px;top:243.52px;font-size:10px;color:#3a3a3a;font-weight:normal;letter-spacing:-0.3px;font-style:normal;-webkit-text-stroke:0.15px #3a3a3a;">Registered Users</div>
<div class="t" style="left:593.20px;top:244.22px;font-size:10px;color:#3a3a3a;font-weight:normal;letter-spacing:0.12px;font-style:normal;-webkit-text-stroke:0.15px #3a3a3a;">2025/02/07 11:45 AM</div>
<div class="t" style="left:695.60px;top:244.22px;font-size:10px;color:#3a3a3a;font-weight:normal;letter-spacing:0.09px;font-style:normal;-webkit-text-stroke:0.15px #3a3a3a;">2025/02/07 12:16 PM</div>
<svg class="b" style="left:817.4px;top:243.78px" width="10" height="10" viewBox="0 0 10 10"><path d="M0.7 3.9Q1.4 1.8 3.1 0.6M0.7 6Q1.4 8.1 3.1 9.3" stroke="#111" stroke-width="1.2" fill="none"/><path d="M3.5 4.25L5.9 0.2A4.7 4.7 0 0 1 9.7 4.25Z M3.5 5.65L5.9 9.7A4.7 4.7 0 0 0 9.7 5.65Z" fill="#111"/></svg>
<div class="b" style="left:348.6px;top:257.9px;width:498.4px;height:19.100000000000023px;background:#f4f4f4;border-bottom:1px solid #e4e4e4;box-sizing:border-box;"></div>
<svg class="b" style="left:351.7px;top:264.7px" width="10" height="7.5" viewBox="0 0 10 7.5"><rect x="1.9" y="1.5" width="6.6" height="3.7" fill="#111"/><path d="M0.1 0.7H1.4M8.3 0.7H9.6M0.1 6.3H1.4M8.3 6.3H9.6" stroke="#111" stroke-width="1.3"/><path d="M2.6 0.7H4M4.8 0.7H6.2M2.6 6.3H4M4.8 6.3H6.2M0.2 3.3V4.2M9.6 3.3V4.2" stroke="#777" stroke-width="1.1"/></svg>
<div class="t" style="left:365.20px;top:263.34px;font-size:10px;color:#3a3a3a;font-weight:normal;letter-spacing:-0.1px;font-style:normal;-webkit-text-stroke:0.15px #3a3a3a;">Symbol</div>
<div class="t" style="left:434.60px;top:262.64px;font-size:10px;color:#3a3a3a;font-weight:normal;letter-spacing:-0.3px;font-style:normal;-webkit-text-stroke:0.15px #3a3a3a;">Silver</div>
<div class="t" style="left:593.20px;top:263.34px;font-size:10px;color:#3a3a3a;font-weight:normal;letter-spacing:0.12px;font-style:normal;-webkit-text-stroke:0.15px #3a3a3a;">2025/02/07 11:45 AM</div>
<div class="t" style="left:695.60px;top:263.34px;font-size:10px;color:#3a3a3a;font-weight:normal;letter-spacing:0.09px;font-style:normal;-webkit-text-stroke:0.15px #3a3a3a;">2025/02/07 12:23 PM</div>
<svg class="b" style="left:817.4px;top:262.90000000000003px" width="10" height="10" viewBox="0 0 10 10"><path d="M0.7 3.9Q1.4 1.8 3.1 0.6M0.7 6Q1.4 8.1 3.1 9.3" stroke="#111" stroke-width="1.2" fill="none"/><path d="M3.5 4.25L5.9 0.2A4.7 4.7 0 0 1 9.7 4.25Z M3.5 5.65L5.9 9.7A4.7 4.7 0 0 0 9.7 5.65Z" fill="#111"/></svg>
<div class="t" style="left:351.80px;top:517.84px;font-size:8.7px;color:#333;font-weight:normal;letter-spacing:0px;font-style:normal;">6 items</div>

</body></html>
